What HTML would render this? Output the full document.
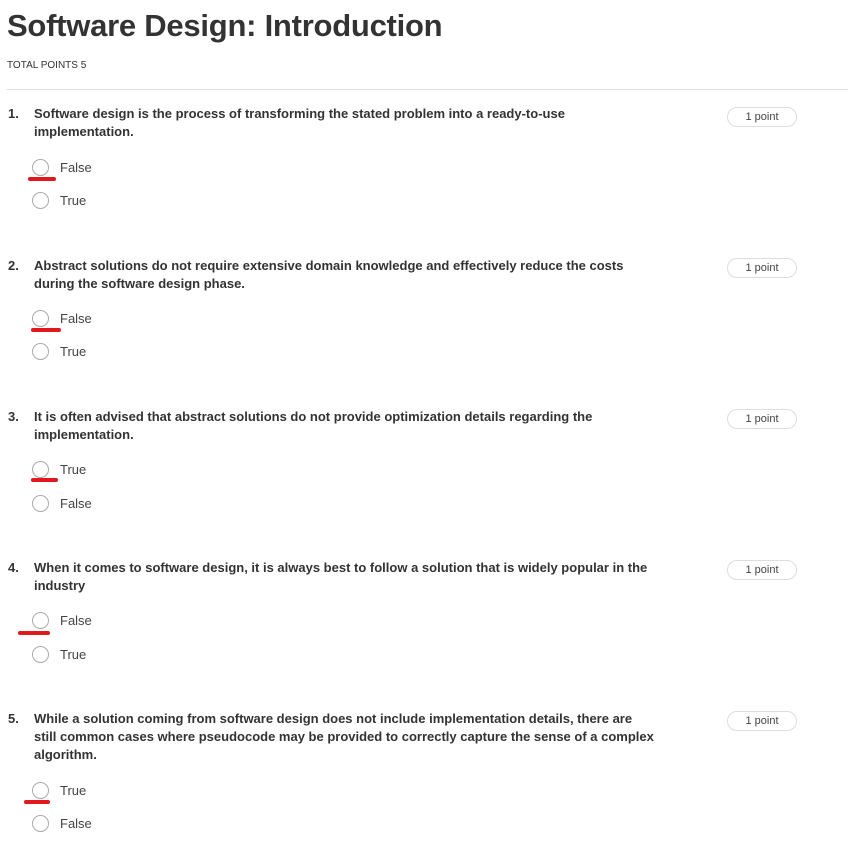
<!DOCTYPE html>
<html><head><style>
body{margin:0;width:853px;height:841px;background:#fff;font-family:"Liberation Sans",sans-serif;color:#333;position:relative;overflow:hidden}
.a{position:absolute;white-space:nowrap}
h1{position:absolute;left:7px;top:8px;margin:0;font-size:31px;font-weight:bold;color:#333;letter-spacing:-0.25px}
.tp{left:7px;top:60px;font-size:10px;color:#333}
.hr{position:absolute;left:7px;top:89px;width:841px;height:1px;background:#ddd}
.n{font-size:13px;font-weight:bold;left:8px}
.q{font-size:13px;font-weight:bold;left:34px;line-height:18px}
.c{position:absolute;border:1.5px solid #aaa;border-radius:50%;left:32px;box-sizing:border-box;width:17px;height:17px}
.o{font-size:13px;left:60px;color:#444}
.p{position:absolute;left:727px;width:68px;height:18px;border:1px solid #ddd;border-radius:10px;font-size:11px;text-align:center;line-height:19px;color:#444}
.r{position:absolute;height:4px;background:#e0191f;border-radius:2px}
</style></head><body>
<h1>Software Design: Introduction</h1>
<div class="a tp">TOTAL POINTS 5</div>
<div class="hr"></div>

<div class="a n" style="top:106px">1.</div>
<div class="a q" style="top:105px">Software design is the process of transforming the stated problem into a ready-to-use<br>implementation.</div>
<div class="p" style="top:107px">1 point</div>
<div class="c" style="top:159px"></div><div class="a o" style="top:160px">False</div>
<div class="c" style="top:192px"></div><div class="a o" style="top:193px">True</div>
<div class="r" style="left:28px;top:177px;width:28px"></div>

<div class="a n" style="top:258px">2.</div>
<div class="a q" style="top:257px">Abstract solutions do not require extensive domain knowledge and effectively reduce the costs<br>during the software design phase.</div>
<div class="p" style="top:258px">1 point</div>
<div class="c" style="top:310px"></div><div class="a o" style="top:311px">False</div>
<div class="c" style="top:343px"></div><div class="a o" style="top:344px">True</div>
<div class="r" style="left:31px;top:328px;width:30px"></div>

<div class="a n" style="top:409px">3.</div>
<div class="a q" style="top:408px">It is often advised that abstract solutions do not provide optimization details regarding the<br>implementation.</div>
<div class="p" style="top:409px">1 point</div>
<div class="c" style="top:461px"></div><div class="a o" style="top:462px">True</div>
<div class="c" style="top:495px"></div><div class="a o" style="top:496px">False</div>
<div class="r" style="left:31px;top:478px;width:27px"></div>

<div class="a n" style="top:560px">4.</div>
<div class="a q" style="top:559px">When it comes to software design, it is always best to follow a solution that is widely popular in the<br>industry</div>
<div class="p" style="top:560px">1 point</div>
<div class="c" style="top:612px"></div><div class="a o" style="top:613px">False</div>
<div class="c" style="top:646px"></div><div class="a o" style="top:647px">True</div>
<div class="r" style="left:18px;top:631px;width:32px"></div>

<div class="a n" style="top:711px">5.</div>
<div class="a q" style="top:710px">While a solution coming from software design does not include implementation details, there are<br>still common cases where pseudocode may be provided to correctly capture the sense of a complex<br>algorithm.</div>
<div class="p" style="top:711px">1 point</div>
<div class="c" style="top:782px"></div><div class="a o" style="top:783px">True</div>
<div class="c" style="top:815px"></div><div class="a o" style="top:816px">False</div>
<div class="r" style="left:24px;top:800px;width:26px"></div>
</body></html>
